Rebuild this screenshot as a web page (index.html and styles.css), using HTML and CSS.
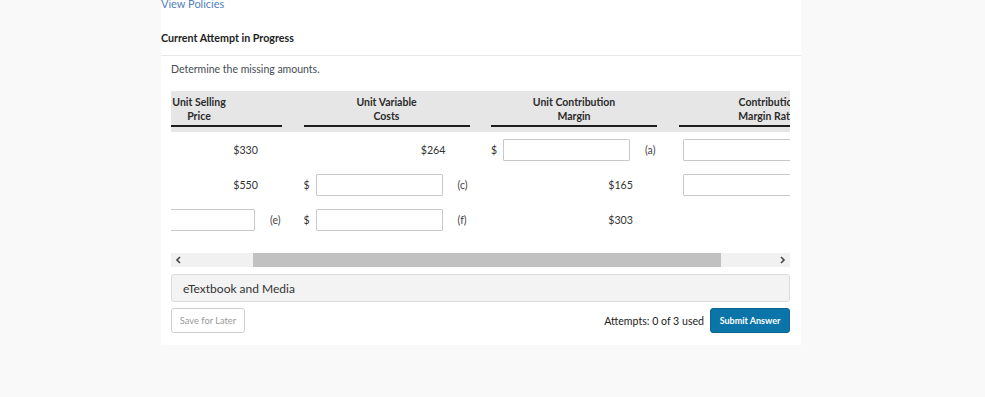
FILE: index.html
```html
<!DOCTYPE html>
<html lang="en">
<head>
<meta charset="utf-8">
<title>Current Attempt in Progress</title>
<link rel="stylesheet" href="styles.css">
</head>
<body>
<div class="panel">
  <a class="policies" href="#">View Policies</a>
  <h2 class="attempt">Current Attempt in Progress</h2>
  <div class="divider"></div>
  <div class="question">
    <p class="prompt">Determine the missing amounts.</p>
    <div class="scroller">
      <div class="table">
        <div class="row head">
          <div class="col"><div class="hcell">Unit Selling<br>Price</div></div>
          <div class="col"><div class="hcell">Unit Variable<br>Costs</div></div>
          <div class="col"><div class="hcell">Unit Contribution<br>Margin</div></div>
          <div class="col wide"><div class="hcell">Contribution<br>Margin Ratio</div></div>
        </div>
        <div class="row">
          <div class="col"><span class="cur"></span><span class="slot"><span class="val">$330</span></span><span class="lab"></span></div>
          <div class="col"><span class="cur"></span><span class="slot"><span class="val">$264</span></span><span class="lab"></span></div>
          <div class="col"><span class="cur">$</span><span class="slot"><input class="inp" type="text"></span><span class="lab">(a)</span></div>
          <div class="col wide"><span class="slot first"><input class="inp" type="text"></span></div>
        </div>
        <div class="row">
          <div class="col"><span class="cur"></span><span class="slot"><span class="val">$550</span></span><span class="lab"></span></div>
          <div class="col"><span class="cur">$</span><span class="slot"><input class="inp" type="text"></span><span class="lab">(c)</span></div>
          <div class="col"><span class="cur"></span><span class="slot"><span class="val">$165</span></span><span class="lab"></span></div>
          <div class="col wide"><span class="slot first"><input class="inp" type="text"></span></div>
        </div>
        <div class="row">
          <div class="col"><span class="cur"></span><span class="slot"><input class="inp" type="text"></span><span class="lab">(e)</span></div>
          <div class="col"><span class="cur">$</span><span class="slot"><input class="inp" type="text"></span><span class="lab">(f)</span></div>
          <div class="col"><span class="cur"></span><span class="slot"><span class="val">$303</span></span><span class="lab"></span></div>
          <div class="col wide"></div>
        </div>
      </div>
    </div>
    <div class="scrollbar">
      <span class="sbtn"><svg width="7" height="8" viewBox="0 0 7 8"><path d="M5 1 L2 4 L5 7" fill="none" stroke="#444" stroke-width="1.6"/></svg></span>
      <span class="track"><span class="thumb" style="margin-left:67px;width:468px"></span></span>
      <span class="sbtn"><svg width="7" height="8" viewBox="0 0 7 8"><path d="M2 1 L5 4 L2 7" fill="none" stroke="#444" stroke-width="1.6"/></svg></span>
    </div>
    <div class="etext">eTextbook and Media</div>
    <div class="footer">
      <button class="save" type="button">Save for Later</button>
      <div class="submit-group">
        <span class="attempts">Attempts: 0 of 3 used</span>
        <button class="submit" type="button">Submit Answer</button>
      </div>
    </div>
  </div>
</div>
</body>
</html>
```
FILE: styles.css
```css
* { box-sizing: border-box; }
body {
  margin: 0;
  background: #f9f9f9;
  font-family: Lato, "Open Sans", sans-serif;
  color: #333;
}
.panel {
  width: 640px;
  margin-left: 161px;
  background: #fff;
  padding-bottom: 12px;
}
.policies {
  display: block;
  margin-top: -3px;
  font-size: 11px;
  line-height: 14px;
  color: #4f80bd;
  text-decoration: none;
}
.attempt {
  margin: 20px 0 0;
  font-size: 10.7px;
  font-weight: 700;
  line-height: 14px;
  color: #222;
}
.divider {
  margin-top: 10px;
  height: 1px;
  background: #e8e8e8;
}
.question {
  padding: 6px 11px 0 10px;
}
.prompt {
  margin: 0;
  font-size: 10.5px;
  line-height: 14px;
  color: #444c55;
}
.scroller {
  margin-top: 15px;
  overflow: hidden;
}
.table {
  margin-left: -55px;
  width: 743px;
}
.row {
  display: flex;
  gap: 21.5px;
  height: 35px;
  align-items: center;
}
.row.head {
  height: auto;
  align-items: stretch;
  background: #e6e6e6;
  padding-bottom: 5px;
}
.col {
  width: 166px;
  flex: none;
  display: flex;
  align-items: center;
}
.col.wide { width: 180px; }
.hcell {
  width: 100%;
  text-align: center;
  font-size: 10.5px;
  font-weight: 700;
  line-height: 14px;
  color: #2b2b2b;
  padding: 4px 0 2px;
  border-bottom: 2px solid #1e1e1e;
}
.cur {
  width: 12px;
  flex: none;
  font-size: 10.5px;
  color: #333;
}
.slot {
  width: 130px;
  flex: none;
  display: flex;
  justify-content: flex-end;
  align-items: center;
}
.slot.first {
  width: 176px;
  justify-content: flex-start;
  padding-left: 4px;
}
.val {
  font-size: 10.7px;
  color: #333;
}
.inp {
  width: 127px;
  height: 22px;
  margin: 0 3px 0 0;
  border: 1px solid #c9c9c9;
  border-radius: 1px;
  background: #fff;
  font: inherit;
  padding: 0 4px;
}
.slot.first .inp { margin: 0; }
.lab {
  flex: none;
  width: 24px;
  padding-left: 12px;
  font-size: 10.5px;
  color: #444;
}
.scrollbar {
  margin-top: 16px;
  height: 14px;
  background: #f1f1f1;
  display: flex;
  align-items: stretch;
}
.sbtn {
  width: 15px;
  flex: none;
  display: flex;
  align-items: center;
  justify-content: center;
}
.track {
  flex: 1;
  display: flex;
}
.thumb {
  display: block;
  background: #c1c1c1;
}
.etext {
  margin-top: 7px;
  height: 28px;
  border: 1px solid #dcdcdc;
  border-radius: 3px;
  background: #f3f3f3;
  padding-left: 11px;
  display: flex;
  align-items: center;
  font-size: 12px;
  color: #333;
}
.footer {
  margin-top: 6px;
  display: flex;
  justify-content: space-between;
  align-items: center;
}
.save {
  width: 74px;
  height: 25px;
  border: 1px solid #cfcfcf;
  border-radius: 3px;
  background: #fff;
  font-family: Lato, sans-serif;
  font-size: 9.3px;
  color: #9a9a9a;
  padding: 0;
}
.submit-group {
  display: flex;
  align-items: center;
  gap: 6px;
}
.attempts {
  font-size: 10.6px;
  color: #1c1c1c;
}
.submit {
  width: 80px;
  height: 25px;
  border: 1px solid #0a6592;
  border-radius: 3px;
  background: #0b74a8;
  color: #fff;
  font-family: Lato, sans-serif;
  font-size: 9px;
  font-weight: 700;
  padding: 0;
}
```
